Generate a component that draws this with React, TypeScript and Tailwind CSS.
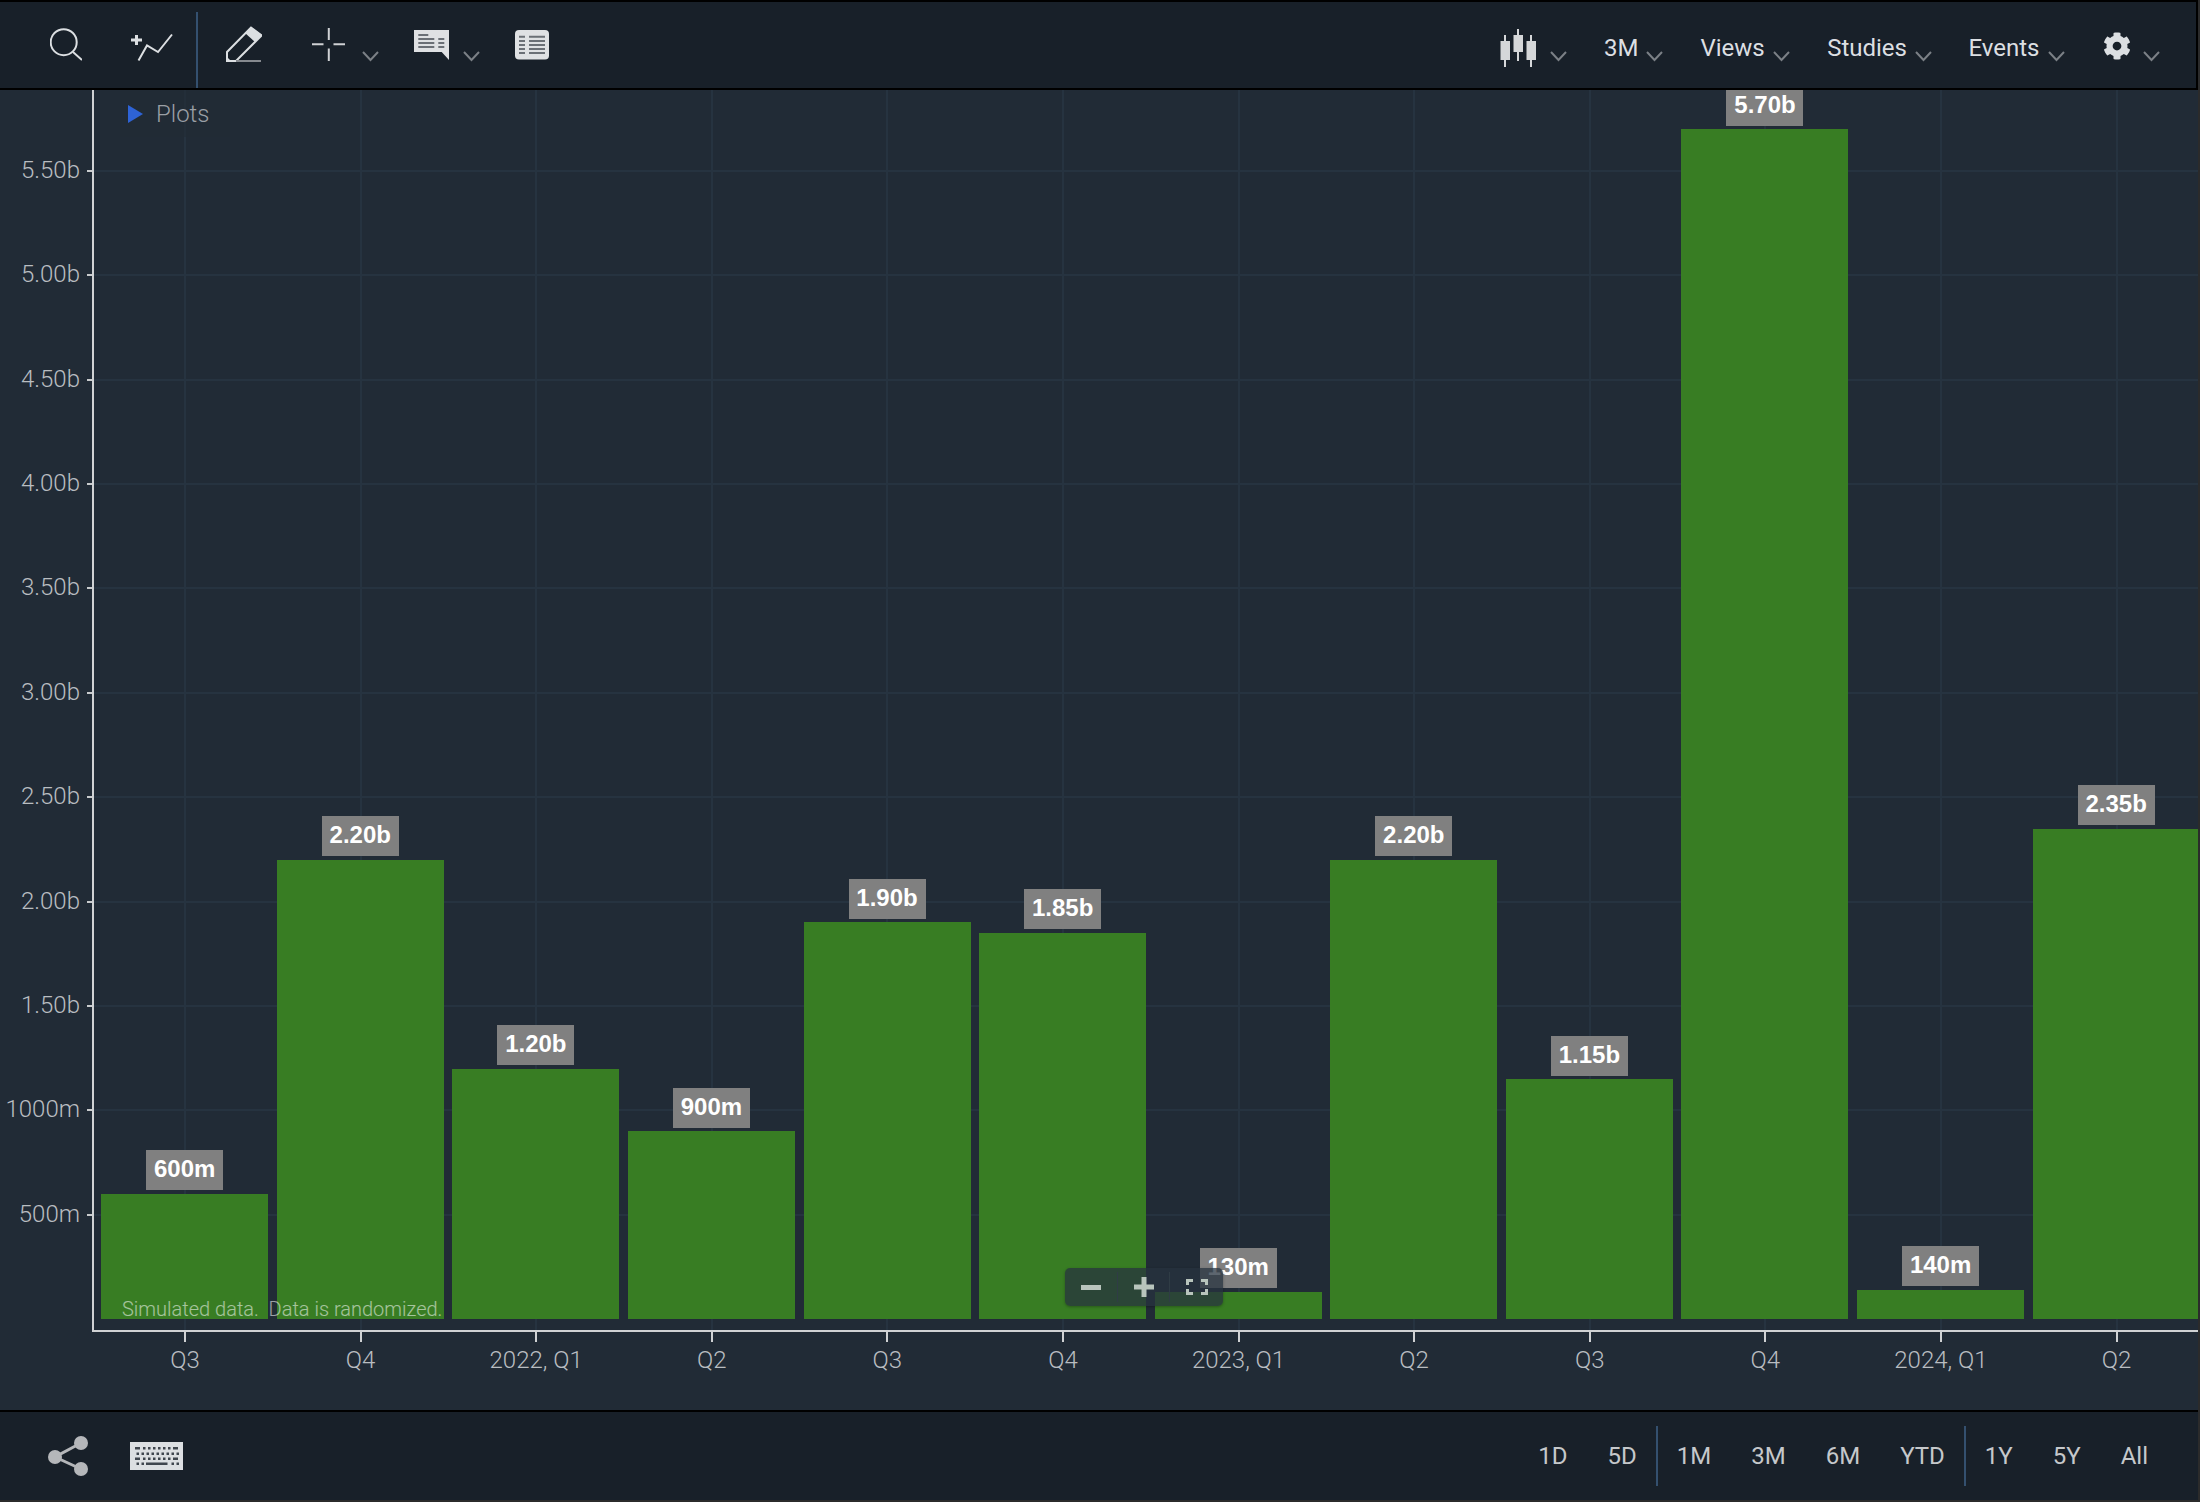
import { FaCog } from "react-icons/fa";

const px = 0.2087;

const bars = [
  { label: "600m", value: 600, tick: "Q3" },
  { label: "2.20b", value: 2200, tick: "Q4" },
  { label: "1.20b", value: 1200, tick: "2022, Q1" },
  { label: "900m", value: 900, tick: "Q2" },
  { label: "1.90b", value: 1900, tick: "Q3" },
  { label: "1.85b", value: 1850, tick: "Q4" },
  { label: "130m", value: 130, tick: "2023, Q1" },
  { label: "2.20b", value: 2200, tick: "Q2" },
  { label: "1.15b", value: 1150, tick: "Q3" },
  { label: "5.70b", value: 5700, tick: "Q4" },
  { label: "140m", value: 140, tick: "2024, Q1" },
  { label: "2.35b", value: 2350, tick: "Q2" },
];

const yTicks = ["5.50b", "5.00b", "4.50b", "4.00b", "3.50b", "3.00b", "2.50b", "2.00b", "1.50b", "1000m", "500m"];

// toolbar icons use the toolbar's own y range so they line up without nudging
function Chevron() {
  return (
    <svg width="17" height="86" viewBox="0 2 17 86" className="shrink-0">
      <polyline points="1,52 8.5,60 16,52" fill="none" stroke="#7b8086" strokeWidth="2" />
    </svg>
  );
}

function SearchIcon() {
  return (
    <svg width="32" height="86" viewBox="50 2 32 86" className="shrink-0">
      <circle cx="63.7" cy="42.2" r="13" fill="none" stroke="#dcdfe2" strokeWidth="2" />
      <line x1="73" y1="52" x2="82" y2="60" stroke="#dcdfe2" strokeWidth="2" />
    </svg>
  );
}

function AddStudyIcon() {
  return (
    <svg width="42" height="86" viewBox="131 2 42 86" className="shrink-0">
      <path d="M131 40h11M136.500 35v10" stroke="#dcdfe2" strokeWidth="3" fill="none" />
      <polyline points="138.500,60.500 147,45.500 158,52 172,34.500" fill="none" stroke="#dcdfe2" strokeWidth="2" />
    </svg>
  );
}

function PencilIcon() {
  return (
    <svg width="36" height="86" viewBox="226 2 36 86" className="shrink-0">
      <path d="M227 61V52L251 27.500L261.500 35.500L236 61Z" fill="none" stroke="#dcdfe2" strokeWidth="2" />
      <path d="M251 27L262 35L255 42L245 33Z" fill="#dcdfe2" />
      <path d="M226 56L232 62H226Z" fill="#dcdfe2" />
      <line x1="236" y1="61" x2="261" y2="61" stroke="#85898e" strokeWidth="2" />
    </svg>
  );
}

function CrosshairIcon() {
  return (
    <svg width="33" height="86" viewBox="312 2 33 86" className="shrink-0">
      <path d="M312 44.300H323.500M333.500 44.300H345M328.800 28V40M328.800 48.500V61" stroke="#cfd1d4" strokeWidth="2" fill="none" />
    </svg>
  );
}

function CommentIcon() {
  return (
    <svg width="35" height="86" viewBox="414 2 35 86" className="shrink-0">
      <path d="M414 30H449V60L441.700 52H414Z" fill="#dfe1e3" />
      <path d="M418.300 35H428.300M418.300 39H434.300M418.300 43H434.300M418.300 47H434.300M438.300 39H444.300M438.300 43H444.300M438.300 47H444.300" stroke="#6b7076" strokeWidth="2" />
    </svg>
  );
}

function TableIcon() {
  return (
    <svg width="34" height="86" viewBox="515.300 2 34 86" className="shrink-0">
      <rect x="515.300" y="30" width="34" height="29.500" rx="4" fill="#dfe1e3" />
      {[36.7, 41, 45, 49, 53].map((y) => (
        <path key={y} d={`M519.300 ${y}H525.300M529.300 ${y}H545.300`} stroke="#6b7076" strokeWidth="2" />
      ))}
    </svg>
  );
}

function CandlesIcon() {
  return (
    <svg width="36" height="86" viewBox="1500 2 36 86" className="shrink-0">
      <g fill="#d5d7d9">
        <rect x="1504" y="35" width="2" height="32" />
        <rect x="1500.500" y="41" width="9.500" height="19" />
        <rect x="1517" y="29" width="2" height="32" />
        <rect x="1513.500" y="35" width="9.500" height="17" />
        <rect x="1530" y="35" width="2" height="32" />
        <rect x="1526.500" y="41" width="9.500" height="19" />
      </g>
    </svg>
  );
}

function ShareIcon() {
  return (
    <svg width="40" height="40" viewBox="0 0 40 40" className="shrink-0">
      <path d="M33 7L7 21L33 33" fill="none" stroke="#b5b7ba" strokeWidth="3" />
      <circle cx="33" cy="7" r="7" fill="#b5b7ba" />
      <circle cx="7" cy="21" r="7" fill="#b5b7ba" />
      <circle cx="33" cy="33" r="7" fill="#b5b7ba" />
    </svg>
  );
}

function KeyboardIcon() {
  const dots = (start: number, count: number) => Array.from({ length: count }, (_, i) => start + i * 5);
  return (
    <svg width="53" height="28" viewBox="0 0 53 28" className="ml-[42px] shrink-0">
      <rect width="53" height="28" fill="#dcdfe2" />
      <g fill="#3f464e">
        <rect x="5" y="5" width="5" height="2.500" />
        <rect x="43" y="5" width="5" height="2.500" />
        {dots(13, 6).map((x) => <rect key={x} x={x} y="5" width="2.500" height="2.500" />)}
        {dots(6.500, 9).map((x) => <rect key={x} x={x} y="10.500" width="2.500" height="2.500" />)}
        <rect x="5" y="15.500" width="5" height="2.500" />
        <rect x="43" y="15.500" width="5" height="2.500" />
        {dots(13, 6).map((x) => <rect key={x} x={x} y="15.500" width="2.500" height="2.500" />)}
        {[6.5, 11.5, 41.5, 46.5].map((x) => <rect key={x} x={x} y="20.500" width="2.500" height="2.500" />)}
        <rect x="16" y="20.500" width="21.500" height="2.500" />
      </g>
    </svg>
  );
}

function MenuButton({ label, className }: { label: string; className: string }) {
  return (
    <button className={`flex h-full items-center gap-2 ${className}`}>
      <span className="pt-[6px] text-[24px] text-[#dcdfe2]">{label}</span>
      <Chevron />
    </button>
  );
}

function RangeButton({ label }: { label: string }) {
  return <button className="px-[20px] text-[24px] text-[#c5c8cb]">{label}</button>;
}

function RangeDivider() {
  return <div className="-mx-px h-[60px] w-[2px] bg-[#34506f]" />;
}

export default function App() {
  return (
    <div className="h-[1502px] w-[2200px] overflow-hidden bg-[#2b2b2b] font-[family-name:Roboto,sans-serif]">
      <div className="flex h-[1500px] w-[2198px] flex-col bg-black pt-[2px]">
        {/* Top toolbar */}
        <header className="mr-[2px] flex h-[86px] items-stretch bg-[#182029] pl-[50px] pr-[36px]">
          <SearchIcon />
          <div className="ml-[49px]"><AddStudyIcon /></div>
          <div className="ml-[23px] mt-[10px] w-[2px] bg-[#34506f]" />
          <div className="ml-[28px]"><PencilIcon /></div>
          <div className="ml-[50px]"><CrosshairIcon /></div>
          <div className="ml-[17px]"><Chevron /></div>
          <div className="ml-[35px]"><CommentIcon /></div>
          <div className="ml-[14px]"><Chevron /></div>
          <div className="ml-[35px]"><TableIcon /></div>

          <div className="ml-auto flex items-center">
            <CandlesIcon />
            <div className="ml-[14px]"><Chevron /></div>
            <MenuButton label="3M" className="ml-[37px]" />
            <MenuButton label="Views" className="ml-[37px]" />
            <MenuButton label="Studies" className="ml-[37.500px]" />
            <MenuButton label="Events" className="ml-[36.500px]" />
            <FaCog className="ml-[38.500px] mt-[2px] text-[28px] text-[#dcdfe2]" />
            <div className="ml-[12px]"><Chevron /></div>
          </div>
        </header>

        {/* Chart */}
        <main className="relative mt-[2px] h-[1320px] overflow-hidden bg-[#212b36]">
          {yTicks.map((tick, i) => (
            <div
              key={tick}
              className="absolute inset-x-0 flex h-[2px] items-center"
              style={{ top: 80 + i * 104.37 }}
            >
              <span className="w-[80px] -translate-y-[1.500px] whitespace-nowrap text-right text-[24px] font-light text-[#b9bdc1]">
                {tick}
              </span>
              <span className="ml-[7px] h-[2px] w-[5px] bg-[#c9cbcd]" />
              <span className="ml-[2px] h-[2px] flex-1 bg-[#263340]" />
            </div>
          ))}

          <div className="absolute left-[97.200px] top-0 grid h-[1240px] grid-cols-[repeat(12,175.6px)]">
            {bars.map((bar, i) => (
              <div key={i} className="flex justify-center">
                <div className="h-full w-[2px] bg-[#263340]" />
              </div>
            ))}
          </div>

          <div className="relative ml-[92px] h-[1242px] border-b-2 border-l-2 border-[#d0d2d4] pb-[11px] pl-[2.850px]">
            <div className="grid h-full grid-cols-[repeat(12,175.6px)] grid-rows-[minmax(0,1fr)]">
              {bars.map((bar, i) => (
                <div key={i} className="flex flex-col items-center justify-end">
                  <div className="flex h-[40px] w-[77px] shrink-0 items-center justify-center bg-[#808080] pb-[2px] font-[family-name:'Liberation_Sans',sans-serif] text-[24px] font-bold text-white">
                    {bar.label}
                  </div>
                  <div
                    className="mt-[3.500px] w-[167px] shrink-0 bg-[#387d23]"
                    style={{ height: bar.value * px }}
                  />
                </div>
              ))}
            </div>
          </div>

          <div className="relative ml-[97.200px] grid grid-cols-[repeat(12,175.6px)]">
            {bars.map((bar, i) => (
              <div key={i} className="flex flex-col items-center">
                <div className="h-[10px] w-[2px] bg-[#d0d2d4]" />
                <span className="whitespace-nowrap text-[24px] font-light text-[#b9bdc1]">{bar.tick}</span>
              </div>
            ))}
          </div>

          {/* Legend */}
          <div className="absolute left-[120px] top-0 flex h-[47px] w-[110px] items-center gap-[13px] bg-[#212b36]/60 pl-[8px]">
            <svg width="15" height="18" viewBox="0 0 15 18" className="shrink-0">
              <path d="M0 0L15 9L0 18Z" fill="#2e63d6" />
            </svg>
            <span className="text-[24px] font-light text-[#9a9fa5]">Plots</span>
          </div>

          {/* Watermark */}
          <div className="absolute left-[122px] top-[1204px] whitespace-pre text-[20px] font-light text-white/55">
            Simulated data.  Data is randomized.
          </div>

          {/* Zoom widget */}
          <div className="absolute left-[1065px] top-[1178px] flex h-[38px] w-[158px] items-center rounded-[5px] bg-[#27333f]/75 text-[#b8c4bc] shadow-[0_1px_3px_rgba(0,0,0,0.3)]">
            <div className="flex h-[30px] w-[52px] items-center justify-center">
              <div className="h-[5px] w-[20px] bg-current" />
            </div>
            <div className="flex h-[30px] w-[53px] items-center justify-center border-x border-[#2f3c45]">
              <svg width="20" height="20" viewBox="0 0 20 20" fill="currentColor">
                <path d="M7.500 0h5v7.500H20v5h-7.500V20h-5v-7.500H0v-5h7.500z" />
              </svg>
            </div>
            <div className="flex h-[30px] flex-1 items-center justify-center">
              <svg width="22" height="16" viewBox="0 0 22 16" fill="none" stroke="currentColor" strokeWidth="3">
                <path d="M1.500 6V1.500H7M15 1.500H20.500V6M1.500 10V14.500H7M15 14.500H20.500V10" />
              </svg>
            </div>
          </div>
        </main>

        {/* Bottom bar */}
        <footer className="mt-[2px] flex h-[88px] items-center bg-[#182029] pl-[48px] pr-[30px]">
          <ShareIcon />
          <KeyboardIcon />
          <div className="ml-auto flex items-center">
            <RangeButton label="1D" />
            <RangeButton label="5D" />
            <RangeDivider />
            <RangeButton label="1M" />
            <RangeButton label="3M" />
            <RangeButton label="6M" />
            <RangeButton label="YTD" />
            <RangeDivider />
            <RangeButton label="1Y" />
            <RangeButton label="5Y" />
            <RangeButton label="All" />
          </div>
        </footer>
      </div>
    </div>
  );
}
